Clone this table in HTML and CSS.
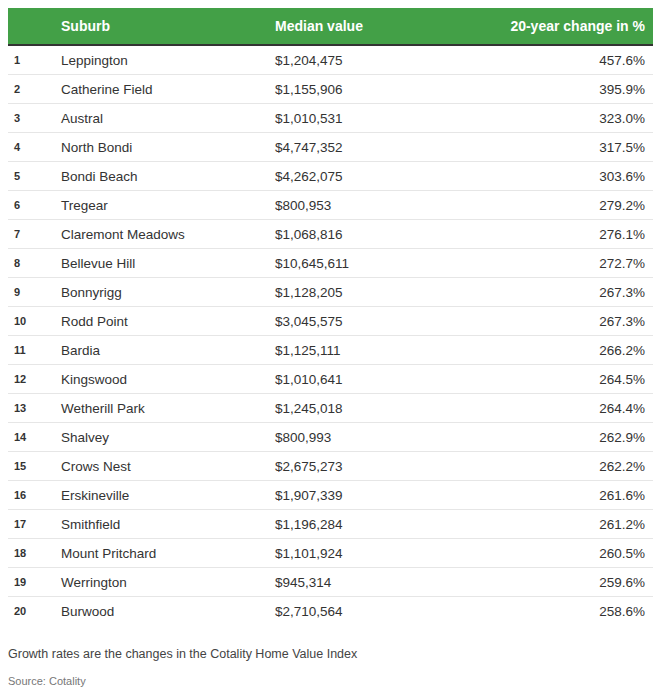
FILE: index.html
```html
<!DOCTYPE html>
<html lang="en">
<head>
<meta charset="utf-8">
<title>Suburbs</title>
<link rel="stylesheet" href="styles.css">
</head>
<body>
<table class="data">
  <thead>
    <tr><th class="rank"></th><th class="sub">Suburb</th><th class="val">Median value</th><th class="pct">20-year change in %</th></tr>
  </thead>
  <tbody>
    <tr><td class="rank">1</td><td>Leppington</td><td>$1,204,475</td><td class="pct">457.6%</td></tr>
    <tr><td class="rank">2</td><td>Catherine Field</td><td>$1,155,906</td><td class="pct">395.9%</td></tr>
    <tr><td class="rank">3</td><td>Austral</td><td>$1,010,531</td><td class="pct">323.0%</td></tr>
    <tr><td class="rank">4</td><td>North Bondi</td><td>$4,747,352</td><td class="pct">317.5%</td></tr>
    <tr><td class="rank">5</td><td>Bondi Beach</td><td>$4,262,075</td><td class="pct">303.6%</td></tr>
    <tr><td class="rank">6</td><td>Tregear</td><td>$800,953</td><td class="pct">279.2%</td></tr>
    <tr><td class="rank">7</td><td>Claremont Meadows</td><td>$1,068,816</td><td class="pct">276.1%</td></tr>
    <tr><td class="rank">8</td><td>Bellevue Hill</td><td>$10,645,611</td><td class="pct">272.7%</td></tr>
    <tr><td class="rank">9</td><td>Bonnyrigg</td><td>$1,128,205</td><td class="pct">267.3%</td></tr>
    <tr><td class="rank">10</td><td>Rodd Point</td><td>$3,045,575</td><td class="pct">267.3%</td></tr>
    <tr><td class="rank">11</td><td>Bardia</td><td>$1,125,111</td><td class="pct">266.2%</td></tr>
    <tr><td class="rank">12</td><td>Kingswood</td><td>$1,010,641</td><td class="pct">264.5%</td></tr>
    <tr><td class="rank">13</td><td>Wetherill Park</td><td>$1,245,018</td><td class="pct">264.4%</td></tr>
    <tr><td class="rank">14</td><td>Shalvey</td><td>$800,993</td><td class="pct">262.9%</td></tr>
    <tr><td class="rank">15</td><td>Crows Nest</td><td>$2,675,273</td><td class="pct">262.2%</td></tr>
    <tr><td class="rank">16</td><td>Erskineville</td><td>$1,907,339</td><td class="pct">261.6%</td></tr>
    <tr><td class="rank">17</td><td>Smithfield</td><td>$1,196,284</td><td class="pct">261.2%</td></tr>
    <tr><td class="rank">18</td><td>Mount Pritchard</td><td>$1,101,924</td><td class="pct">260.5%</td></tr>
    <tr><td class="rank">19</td><td>Werrington</td><td>$945,314</td><td class="pct">259.6%</td></tr>
    <tr><td class="rank">20</td><td>Burwood</td><td>$2,710,564</td><td class="pct">258.6%</td></tr>
  </tbody>
</table>
<p class="note">Growth rates are the changes in the Cotality Home Value Index</p>
<p class="source">Source: Cotality</p>
</body>
</html>
```
FILE: styles.css
```css
html, body {
  margin: 0;
  background: #ffffff;
}
body {
  padding: 8px;
  font-family: "Liberation Sans", Arial, sans-serif;
  color: #333333;
}
.data {
  width: 645px;
  border-collapse: collapse;
  table-layout: fixed;
}
.data th {
  background: #43a047;
  color: #ffffff;
  font-weight: bold;
  font-size: 14px;
  height: 36px;
  padding: 0 8px;
  text-align: left;
  border-bottom: 2px solid #333333;
}
.data th.rank { width: 29px; }
.data th.sub { width: 198px; }
.data td {
  font-size: 13.5px;
  height: 28px;
  padding: 0 8px;
  border-bottom: 1px solid #e6e6e6;
  color: #333333;
}
.data tbody tr:last-child td { border-bottom: none; }
.data td.rank {
  font-size: 11px;
  font-weight: bold;
  padding-left: 6px;
}
.data .pct { text-align: right; }
.note {
  margin: 20px 0 0 0;
  font-size: 12.5px;
  line-height: 18px;
  color: #444444;
}
.source {
  margin: 11px 0 0 0;
  font-size: 11px;
  line-height: 14px;
  color: #777777;
}
```
